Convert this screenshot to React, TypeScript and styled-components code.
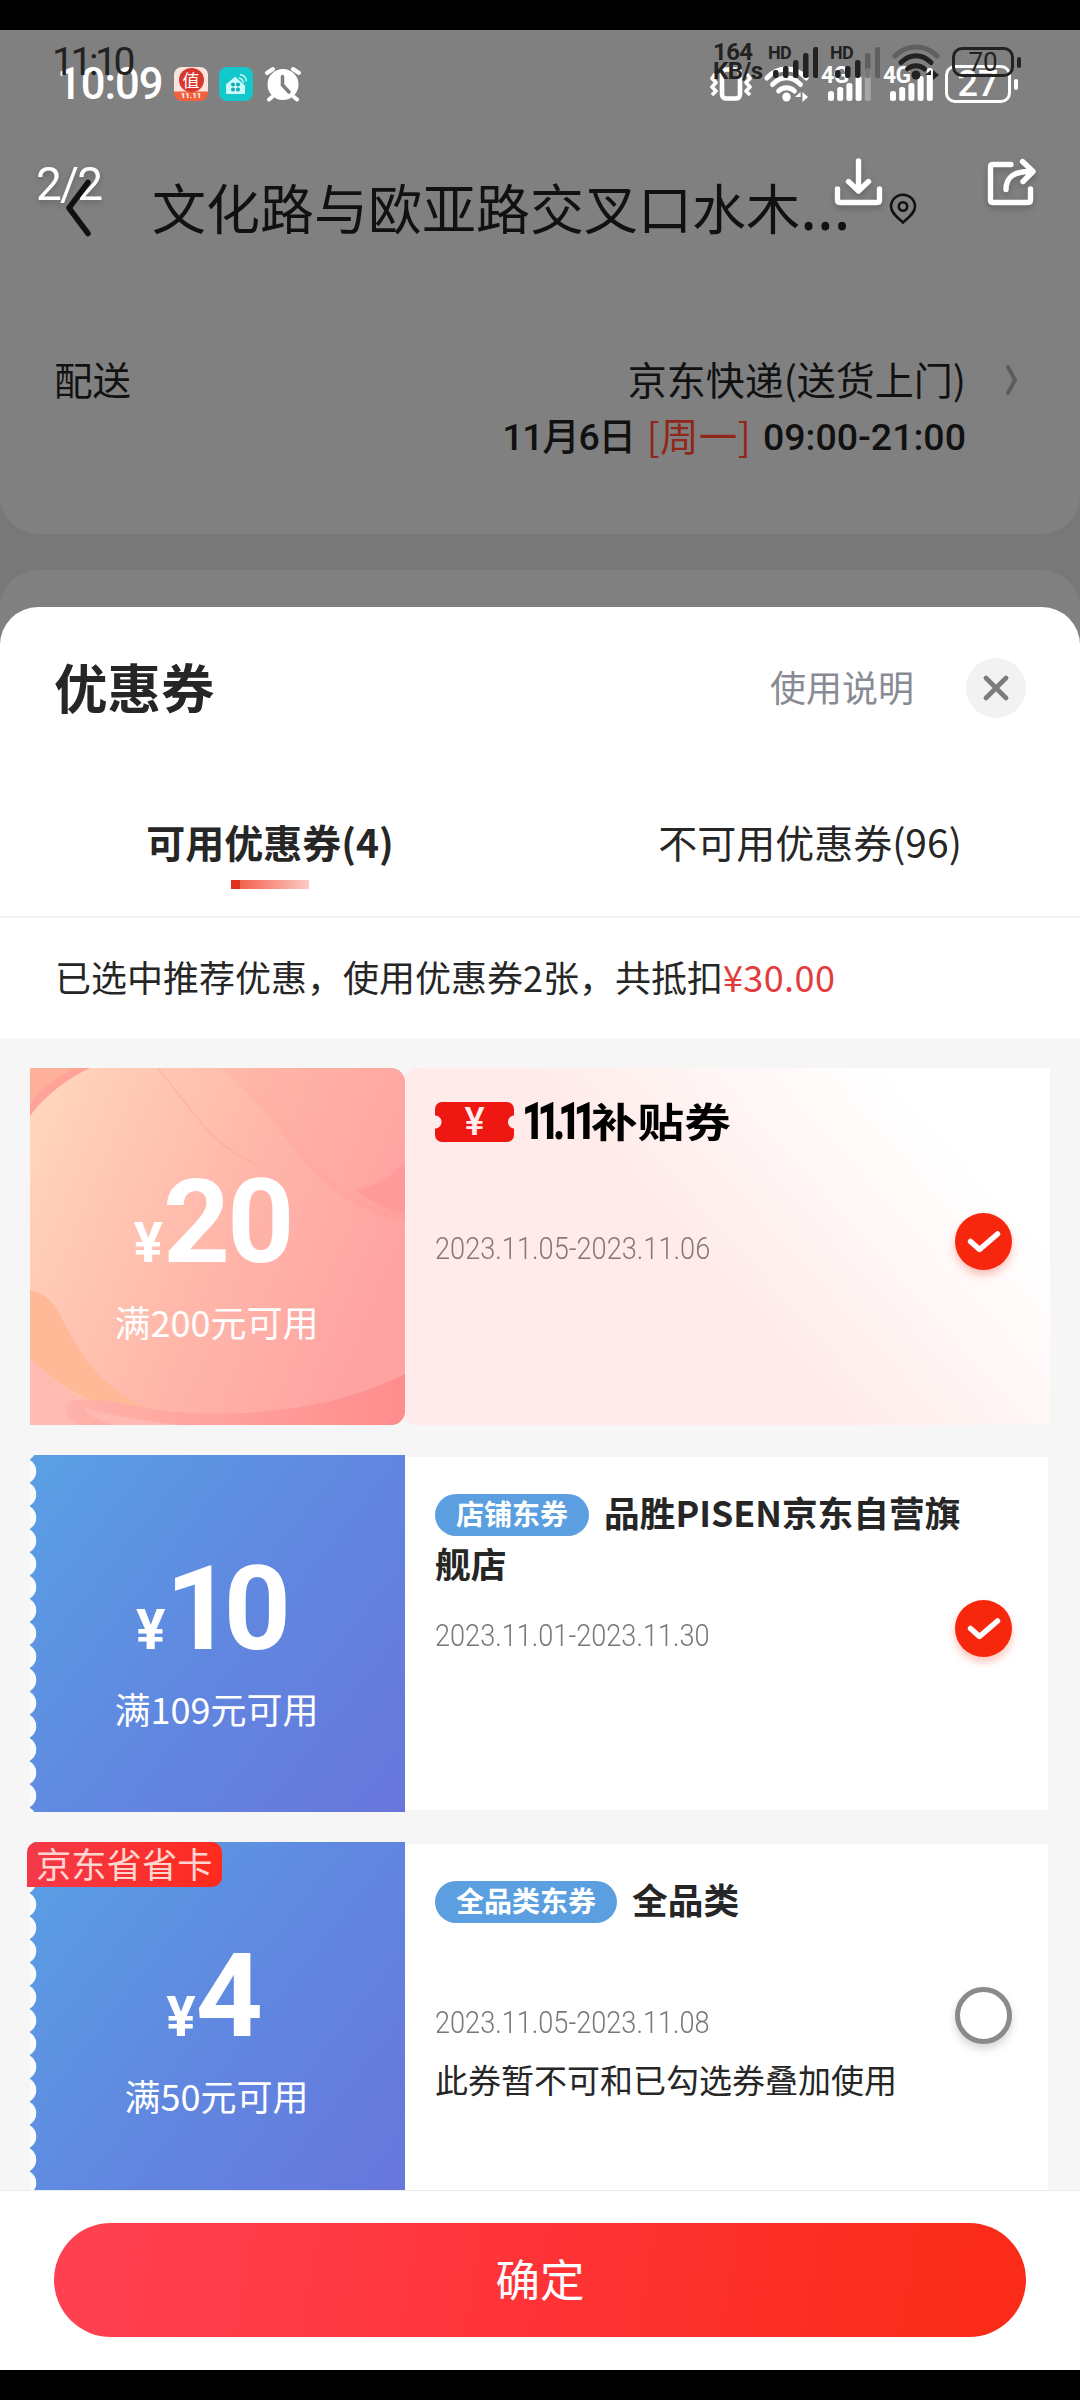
import React, { useState } from 'react';
import styled, { createGlobalStyle, css } from 'styled-components';

const sans = `Roboto, "Noto Sans CJK SC", sans-serif`;
const cjk = `"Noto Sans CJK SC", Roboto, sans-serif`;

const GlobalStyle = createGlobalStyle`
  * { box-sizing: border-box; }
  body { margin: 0; background: #000; }
  button { font: inherit; border: 0; padding: 0; margin: 0; background: none; color: inherit; }
`;

const Screen = styled.main`
  width: 1080px;
  height: 2400px;
  padding: 30px 0;
  overflow: hidden;
  background: #000;
  font-family: ${cjk};
  color: #262626;
  display: flex;
  flex-direction: column;
`;

/* ---------- dimmed order page ---------- */

const OrderPage = styled.section`
  position: relative;
  height: 619px;
  margin-bottom: -42px;
  flex: none;
  background: #787878;
  color: #111;
  display: flex;
  flex-direction: column;
  gap: 36px;
`;

const OrderCard = styled.div`
  height: 504px;
  flex: none;
  background: #808080;
  border-radius: 0 0 38px 38px;
  padding: 144px 60px 0 65px;
`;

const NextCard = styled.div`
  flex: 1;
  background: #808080;
  border-radius: 38px 38px 0 0;
`;

const AddressBar = styled.header`
  height: 70px;
  display: flex;
  align-items: center;
`;

const Address = styled.h1`
  margin: -4px 0 0 60px;
  font-size: 54px;
  line-height: 70px;
  font-weight: 400;
  white-space: nowrap;
`;

const Dots = styled.span`
  font-family: "Noto Sans", sans-serif;
  font-size: 64px;
  line-height: 40px;
`;

const PinSlot = styled.span`
  display: flex;
  margin-left: 38px;
`;

const DeliveryRow = styled.div`
  display: flex;
  justify-content: space-between;
  margin-top: 106px;
  font-size: 39px;
  line-height: 56px;
`;

const DeliveryLabel = styled.span`
  font-size: 38.5px;
  margin-left: -11px;
`;

const DeliveryValue = styled.div`
  display: flex;
  flex-direction: column;
  align-items: flex-end;
  margin: 0 -1px 0 auto;
`;

const DeliveryTime = styled.div`
  display: flex;
  gap: 12px;
  margin-top: 3px;
  font-family: ${sans};
  font-size: 37.5px;
  font-weight: 500;
  white-space: nowrap;
`;

const DeliveryDay = styled.span`
  letter-spacing: -1.3px;
`;

const Weekday = styled.span`
  font-family: ${cjk};
  font-size: 38.5px;
  font-weight: 400;
  line-height: 51px;
  letter-spacing: 0.3px;
  color: #8f2818;
`;

const RowArrow = styled.span`
  width: 55px;
  height: 60px;
  display: flex;
  align-items: center;
  justify-content: flex-end;
`;

/* ---------- overlaid status bars and viewer tools ---------- */

const StatusBar = styled.div<{ $top: number; $left: number; $right: number; $height: number; $tone: string }>`
  position: absolute;
  top: ${p => p.$top}px;
  left: ${p => p.$left}px;
  right: ${p => p.$right}px;
  height: ${p => p.$height}px;
  display: flex;
  align-items: center;
  justify-content: space-between;
  color: ${p => p.$tone};
  font-family: ${sans};
`;

const StatusGroup = styled.div<{ $gap: number }>`
  display: flex;
  align-items: center;
  gap: ${p => p.$gap}px;
  svg { display: block; flex: none; }
`;

const Clock = styled.span<{ $size: number; $weight: number; $width: number; $track: number }>`
  width: ${p => p.$width}px;
  padding-top: 1px;
  font-size: ${p => p.$size}px;
  font-weight: ${p => p.$weight};
  letter-spacing: ${p => p.$track}px;
  line-height: 1;
  white-space: nowrap;
`;

const Speed = styled.span`
  display: flex;
  flex-direction: column;
  width: 43px;
  font-size: 24px;
  line-height: 19px;
  font-weight: 700;
  letter-spacing: -0.6px;
`;

const SignalBox = styled.span<{ $w: number; $h: number }>`
  position: relative;
  display: flex;
  align-items: flex-end;
  justify-content: flex-end;
  width: ${p => p.$w}px;
  height: ${p => p.$h}px;
`;

const SignalMark = styled.span<{ $size: number }>`
  position: absolute;
  left: 0;
  top: 0;
  font-size: ${p => p.$size}px;
  line-height: 0.8;
  font-weight: 700;
  letter-spacing: -0.8px;
`;

const Battery = styled.span<{ $w: number; $h: number; $line: number; $size: number; $weight: number }>`
  position: relative;
  width: ${p => p.$w}px;
  height: ${p => p.$h}px;
  margin-right: 7px;
  border: ${p => p.$line}px solid currentColor;
  border-radius: 10px;
  display: flex;
  align-items: center;
  justify-content: center;
  font-size: ${p => p.$size}px;
  font-weight: ${p => p.$weight};
  line-height: 1;
  &::after {
    content: '';
    position: absolute;
    right: -${p => p.$line + 7}px;
    top: 50%;
    width: 4px;
    height: 11px;
    margin-top: -5px;
    border-radius: 2px;
    background: currentColor;
  }
`;

const AppBadge = styled.span<{ $kind: 'deal' | 'home' }>`
  width: 34px;
  height: 34px;
  border-radius: 8px;
  overflow: hidden;
  display: flex;
  flex-direction: column;
  align-items: center;
  justify-content: center;
  color: #fff;
  ${p =>
    p.$kind === 'deal'
      ? css`background: linear-gradient(#fbe4dc 0 70%, #f2603c 74%);`
      : css`background: #12c8cb;`}
`;

const DealSeal = styled.span`
  width: 25px;
  height: 24px;
  border-radius: 12px;
  background: #d8392f;
  font-family: ${cjk};
  font-size: 17px;
  line-height: 23px;
  text-align: center;
`;

const DealStrip = styled.span`
  font-size: 8px;
  line-height: 8px;
  font-weight: 700;
`;

const ViewerBar = styled.div`
  position: absolute;
  top: 120px;
  left: 36px;
  right: 43px;
  height: 64px;
  display: flex;
  align-items: center;
  gap: 104px;
  color: #fff;
  filter: drop-shadow(0 3px 3px rgba(0, 0, 0, 0.22));
  svg { display: block; }
`;

const PageCount = styled.span`
  margin-right: auto;
  padding-top: 3px;
  font-family: ${sans};
  font-size: 46px;
  line-height: 64px;
  letter-spacing: -1.8px;
`;

const BackButton = styled.button`
  display: flex;
  width: 27px;
  margin-top: -2px;
  position: relative;
  z-index: 2;
`;

/* ---------- coupon sheet ---------- */

const Sheet = styled.section`
  position: relative;
  flex: 1;
  min-height: 0;
  display: flex;
  flex-direction: column;
  background: #fff;
  border-radius: 38px 38px 0 0;
  overflow: hidden;
`;

const SheetHeader = styled.header`
  display: flex;
  align-items: center;
  height: 162px;
  padding: 0 54px;
  flex: none;
`;

const SheetTitle = styled.h2`
  margin: -4px auto 0 0;
  font-size: 53.5px;
  font-weight: 700;
  line-height: 80px;
`;

const HelpLink = styled.button`
  margin-top: -4px;
  font-size: 36px;
  line-height: 50px;
  color: #888b94;
`;

const CloseButton = styled.button`
  width: 60px;
  height: 60px;
  margin-left: 52px;
  border-radius: 50%;
  background: #f2f2f2;
  display: flex;
  align-items: center;
  justify-content: center;
`;

const Tabs = styled.nav`
  display: grid;
  grid-template-columns: 1fr 1fr;
  height: 149px;
  flex: none;
  border-bottom: 2px solid #f1f1f1;
`;

const Tab = styled.button<{ $active: boolean }>`
  display: flex;
  flex-direction: column;
  align-items: center;
  padding-top: 44px;
  font-size: 39px;
  line-height: 56px;
  font-weight: ${p => (p.$active ? 700 : 400)};
`;

const TabMark = styled.span`
  width: 78px;
  height: 9px;
  margin-top: 11px;
  background: linear-gradient(90deg, #e1301d 0 9px, #f2604e 9px, #fccdc4 100%);
`;

const Summary = styled.p`
  margin: 0;
  height: 120px;
  flex: none;
  padding: 0 55px;
  font-size: 36px;
  line-height: 117px;
`;

const SummaryAmount = styled.span`
  color: #e23c3c;
  letter-spacing: 0.4px;
`;

const CouponList = styled.div`
  height: 1153px;
  flex: none;
  padding: 30px 30px 0;
  background: #f6f6f6;
  overflow: hidden;
  display: flex;
  flex-direction: column;
  gap: 30px;
  border-bottom: 1px solid #ececec;
`;

const Card = styled.article`
  position: relative;
  display: flex;
  height: 357px;
  flex: none;
`;

const Face = styled.div<{ $festive?: boolean }>`
  position: relative;
  width: 375px;
  flex: none;
  display: flex;
  flex-direction: column;
  align-items: center;
  padding-top: 99px;
  color: #fff;
  overflow: hidden;
  z-index: 1;
  ${p =>
    p.$festive
      ? css`border-radius: 0 14px 14px 0;`
      : css`
          background:
            radial-gradient(circle at -6.5px 11.6px, #fafbfd 12.4px, transparent 13.2px) 0 4.6px / 7px 23.2px repeat-y,
            linear-gradient(128deg, #5a9ee4 5%, #6088e0 50%, #6876dc 100%);
          border-top-left-radius: 5px;
        `}
`;

const FaceArt = styled.svg`
  position: absolute;
  inset: 0;
`;

const Amount = styled.div<{ $shift: number }>`
  position: relative;
  display: flex;
  align-items: baseline;
  height: 127px;
  margin-left: ${p => p.$shift}px;
  font-family: ${sans};
  font-size: 117px;
  line-height: 110px;
  font-weight: 700;
`;

const Yen = styled.span`
  font-size: 55px;
`;

const Digits = styled.span<{ $track: number }>`
  display: inline-block;
  letter-spacing: ${p => p.$track}px;
`;

const Rule = styled.div`
  position: relative;
  margin-left: -2px;
  font-size: 36px;
  line-height: 54px;
`;

const Detail = styled.div<{ $festive?: boolean }>`
  position: relative;
  flex: 1;
  display: flex;
  flex-direction: column;
  align-items: flex-start;
  ${p =>
    p.$festive
      ? css`
          padding: 33px 85px 0 30px;
          background: linear-gradient(48deg, #ffebe9 45%, #fff6f5 65%, #fff 83%);
          border-radius: 12px 0 0 12px;
        `
      : css`
          margin: 2px 2px 2px 0;
          padding: 29px 80px 0 30px;
          background: #fff;
        `}
`;

const Heading = styled.h3`
  margin: 0;
  height: 126px;
  font-size: 35.7px;
  line-height: 51px;
  font-weight: 700;
`;

const Tag = styled.span`
  display: inline-block;
  height: 42px;
  margin-right: 15px;
  padding: 0 21px;
  border-radius: 21px;
  background: #5b9fe0;
  color: #fff;
  font-size: 28px;
  line-height: 39px;
  vertical-align: 2px;
`;

const BrandLine = styled.div`
  display: flex;
  align-items: center;
  height: 42px;
  margin-bottom: 82px;
  color: #000;
`;

const TicketIcon = styled.span`
  width: 79px;
  height: 40px;
  border-radius: 7px;
  margin-right: 8px;
  display: flex;
  align-items: center;
  justify-content: center;
  color: #ffeceb;
  font-family: ${sans};
  font-size: 38px;
  font-weight: 500;
  line-height: 40px;
  background:
    radial-gradient(circle at 0 50%, #ffebe9 6px, transparent 7px) left / 50% 100% no-repeat,
    radial-gradient(circle at 100% 50%, #ffebe9 6px, transparent 7px) right / 50% 100% no-repeat,
    #ee1712;
`;

const BrandDigits = styled.span`
  width: 69px;
  font-family: ${sans};
  font-size: 51px;
  font-weight: 900;
  line-height: 42px;
  letter-spacing: -9px;
  white-space: nowrap;
  transform: scaleX(0.76);
  transform-origin: left center;
`;

const BrandName = styled.span`
  font-size: 39.5px;
  font-weight: 700;
  line-height: 38px;
  margin-top: -4px;
  transform: scaleX(1.18);
  transform-origin: left center;
`;

const Period = styled.time<{ $festive?: boolean }>`
  font-family: ${sans};
  font-size: 32px;
  font-weight: 300;
  line-height: 46px;
  white-space: nowrap;
  transform: scaleX(${p => (p.$festive ? 0.85 : 0.848)});
  transform-origin: left center;
  color: ${p => (p.$festive ? '#857878' : '#777')};
`;

const Note = styled.p`
  margin: 8px 0 0;
  font-size: 33px;
  line-height: 52px;
  white-space: nowrap;
`;

const Choice = styled.button<{ $on: boolean; $edge: number; $up: number }>`
  position: absolute;
  top: ${p => p.$up}px;
  right: ${p => p.$edge}px;
  width: 57px;
  height: 57px;
  border-radius: 50%;
  display: flex;
  align-items: center;
  justify-content: center;
  ${p =>
    p.$on
      ? css`background: #f6270c; box-shadow: 0 5px 9px rgba(246, 39, 12, 0.28);`
      : css`background: #fff; border: 5px solid #8a8a8a; box-shadow: 0 5px 8px rgba(0, 0, 0, 0.16);`}
`;

const Sticker = styled.span`
  position: absolute;
  z-index: 2;
  top: 0;
  left: -3px;
  height: 45px;
  padding: 0 9px;
  border-radius: 10px 10px 10px 0;
  background: linear-gradient(100deg, #f43a4b, #ff2a1c);
  color: #ffd5d0;
  font-size: 35.3px;
  line-height: 42px;
`;

const Footer = styled.footer`
  flex: 1;
  padding: 32px 54px;
`;

const Confirm = styled.button`
  display: block;
  width: 972px;
  height: 114px;
  padding-bottom: 4px;
  border-radius: 57px;
  background: linear-gradient(100deg, #ff4050 5%, #ff3337 50%, #fa2c19 92%);
  color: #fff;
  font-size: 44.5px;
  line-height: 110px;
`;

/* ---------- drawings ---------- */

const Bars = ({ w, step, hs, fade, faded }: { w: number; step: number; hs: number[]; fade: number; faded: number }) => {
  const top = Math.max(...hs);
  return (
    <svg width={step * (hs.length - 1) + w} height={top}>
      {hs.map((h, i) => (
        <rect key={i} x={i * step} y={top - h} width={w} height={h} rx={w / 2.4} fill="currentColor"
          opacity={i >= hs.length - faded ? fade : 1} />
      ))}
    </svg>
  );
};

const Wifi = ({ outer, width }: { outer: number; width: number }) => (
  <svg width={width} height="36" viewBox="0 0 48 36" preserveAspectRatio="none" fill="none" stroke="currentColor" strokeWidth="5" strokeLinecap="round">
    <path d="M3 12C15 0 33 0 45 12" opacity={outer} />
    <path d="M9 18.5C18 9.5 30 9.5 39 18.5" />
    <path d="M15.5 25C20 20.5 28 20.5 32.500 25" />
    <circle cx="24" cy="31" r="4.500" fill="currentColor" stroke="none" />
    <path d="M39 26l-6 5h6zM41 36V26l6 5z" fill="currentColor" stroke="none" />
  </svg>
);

const Vibrate = () => (
  <svg width="42" height="34" viewBox="0 0 42 34" fill="none" stroke="currentColor">
    <rect x="12" y="2.500" width="18" height="29" rx="4" strokeWidth="4.600" />
    <path d="M5 7L2 11.500L6 15.500L2 20L6 24L2 28" strokeWidth="3.600" strokeLinejoin="round" />
    <path d="M37 7L40 11.500L36 15.500L40 20L36 24L40 28" strokeWidth="3.600" strokeLinejoin="round" />
  </svg>
);

const Alarm = () => (
  <svg width="38" height="36" viewBox="0 0 38 36" fill="none" strokeLinecap="round">
    <path d="M3 7L9 3M35 7L29 3M8 31L5 33.500M30 31L33 33.500" stroke="#fff" strokeWidth="4" />
    <circle cx="19" cy="18.500" r="15.500" fill="#fff" />
    <path d="M18.500 10.500V19L25 26" stroke="#808080" strokeWidth="3.600" />
  </svg>
);

const House = () => (
  <svg width="22" height="22" viewBox="0 0 22 22">
    <path d="M2 20V12L10 5L19 13V20z" fill="#c9fbf8" stroke="#c9fbf8" strokeWidth="2" strokeLinejoin="round" />
    <path d="M14 5q4 1 4.500 5M15 1.500q6 1 6.500 7" stroke="#c9fbf8" strokeWidth="1.300" fill="none" />
    <g fill="#15a9b0"><circle cx="8" cy="11.500" r="2" /><circle cx="13" cy="11.500" r="2" /><circle cx="8" cy="16.500" r="2" /><circle cx="13" cy="16.500" r="2" /></g>
  </svg>
);

const Pin = () => (
  <svg width="28" height="32" viewBox="0 0 28 32" fill="none" stroke="#111" strokeWidth="2.600">
    <path d="M14 29.500C9 25 2 20 2 13.500A12 11.800 0 0 1 26 13.500C26 20 19 25 14 29.500z" />
    <circle cx="14" cy="13.500" r="4.200" />
  </svg>
);

const Download = () => (
  <svg width="49" height="48" viewBox="0 0 49 48" fill="none" stroke="currentColor" strokeWidth="5.400" strokeLinecap="round" strokeLinejoin="round">
    <path d="M24.500 3V32M14.500 23.500L24.500 33L34.500 23.500M3.500 31V42Q3.500 44.500 6 44.500H43Q45.500 44.500 45.500 42V31" />
  </svg>
);

const Share = () => (
  <svg width="50" height="48" viewBox="0 0 50 48" fill="none" stroke="currentColor" strokeWidth="5.400" strokeLinecap="round" strokeLinejoin="round">
    <path d="M24 6.500H6Q3.500 6.500 3.500 9V42Q3.500 44.500 6 44.500H41Q43.500 44.500 43.500 42V31" />
    <path d="M19 31.500C19 19 27 13 45 13.500M35.500 3.500L46 13.500L36 23.500" />
  </svg>
);

const Tick = () => (
  <svg width="34" height="24" viewBox="0 0 34 24" fill="none" stroke="#fff" strokeWidth="5.500" strokeLinecap="round" strokeLinejoin="round">
    <path d="M3.500 11.500L12.500 19.500L30.500 4" />
  </svg>
);

const PetalArt = () => (
  <FaceArt width="375" height="357" viewBox="0 0 375 357" fill="none">
    <defs>
      <linearGradient id="petal" x1="0" y1=".15" x2="1" y2=".55">
        <stop offset="0" stopColor="#ffd5bd" /><stop offset=".5" stopColor="#ffb9aa" /><stop offset="1" stopColor="#ffa2a2" />
      </linearGradient>
      <linearGradient id="petalRed" x1="0" y1="0" x2="1" y2="0">
        <stop offset="0" stopColor="#ffb3aa" /><stop offset="1" stopColor="#ff8c8c" />
      </linearGradient>
      <linearGradient id="petalEdge" x1="0" y1="0" x2="1" y2="1">
        <stop offset="0" stopColor="#ff8f88" stopOpacity=".12" /><stop offset="1" stopColor="#ff8f80" stopOpacity=".22" />
      </linearGradient>
    </defs>
    <rect width="375" height="357" fill="url(#petal)" />
    <path d="M205 0C240 28 262 75 295 105C320 130 350 144 375 146V0z" fill="#ff9494" opacity=".12" />
    <path d="M190 0C235 32 262 88 295 115C320 136 350 152 375 153V146C350 144 320 130 295 105C262 75 240 28 205 0z" fill="url(#petalEdge)" />
    <path d="M128 0C165 45 180 78 230 98" stroke="#ff9c90" strokeWidth="1.500" opacity=".35" />
    <path d="M325 122Q352 117 375 95V146Q348 140 325 122z" fill="#ff8585" opacity=".28" />
    <path d="M0 0H60C38 10 14 28 0 48z" fill="#ffb09b" />
    <path d="M60 0C38 10 14 28 0 48V36C12 20 28 8 45 0z" fill="#ffa297" />
    <path d="M0 222C14 224 24 234 34 254C54 296 84 332 132 345L70 336C40 325 18 308 0 290z" fill="#ffb996" />
    <path d="M0 290C25 316 45 328 60 334L140 345V357H0z" fill="#ffbab2" />
    <path d="M85 333C160 355 290 350 375 306V357H48C30 345 32 332 50 332z" fill="url(#petalRed)" />
    <path d="M55 340Q52 347 82 357H150Q90 350 55 340z" fill="#ffb8b2" />
  </FaceArt>
);

/* ---------- data ---------- */

type Coupon = {
  id: string; amount: string; shift: number; track: number; rule: string; period: string;
  festive?: boolean; tag?: string; title?: string; note?: string; sticker?: string;
};

const coupons: Coupon[] = [
  { id: 'subsidy', amount: '20', shift: -10, track: -3, rule: '满200元可用', period: '2023.11.05-2023.11.06', festive: true },
  { id: 'shop', amount: '10', shift: -17, track: -9, rule: '满109元可用', period: '2023.11.01-2023.11.30', tag: '店铺东券', title: '品胜PISEN京东自营旗舰店' },
  { id: 'all', amount: '4', shift: -12, track: -6, rule: '满50元可用', period: '2023.11.05-2023.11.08', tag: '全品类东券', title: '全品类', note: '此券暂不可和已勾选券叠加使用', sticker: '京东省省卡' },
];

const CouponCard = ({ c, on, onToggle }: { c: Coupon; on: boolean; onToggle: () => void }) => (
  <Card>
    {c.sticker && <Sticker>{c.sticker}</Sticker>}
    <Face $festive={c.festive}>
      {c.festive && <PetalArt />}
      <Amount $shift={c.shift}><Yen>¥</Yen><Digits $track={c.track}>{c.amount}</Digits></Amount>
      <Rule>{c.rule}</Rule>
    </Face>
    <Detail $festive={c.festive}>
      {c.festive ? (
        <BrandLine><TicketIcon>¥</TicketIcon><BrandDigits>11.11</BrandDigits><BrandName>补贴券</BrandName></BrandLine>
      ) : (
        <Heading><Tag>{c.tag}</Tag>{c.title}</Heading>
      )}
      <Period $festive={c.festive}>{c.period}</Period>
      {c.note && <Note>{c.note}</Note>}
      <Choice $on={on} $edge={c.festive ? 38 : 36} $up={c.festive ? 145 : 143} onClick={onToggle}>{on && <Tick />}</Choice>
    </Detail>
  </Card>
);

export default function App() {
  const [tab, setTab] = useState(0);
  const [picked, setPicked] = useState<string[]>(['subsidy', 'shop']);
  const toggle = (id: string) => setPicked(p => (p.includes(id) ? p.filter(x => x !== id) : [...p, id]));

  return (
    <>
      <GlobalStyle />
      <Screen>
        <OrderPage>
          <StatusBar $top={35} $left={57} $right={62} $height={38} $tone="#fff">
            <StatusGroup $gap={11}>
              <Clock $size={43.5} $weight={500} $width={106} $track={-1}>10:09</Clock>
              <AppBadge $kind="deal"><DealSeal>值</DealSeal><DealStrip>11.11</DealStrip></AppBadge>
              <AppBadge $kind="home"><House /></AppBadge>
              <Alarm />
            </StatusGroup>
            <StatusGroup $gap={12}>
              <Vibrate />
              <Wifi outer={1} width={45} />
              <SignalBox $w={50} $h={34}><SignalMark $size={23}>4G</SignalMark><Bars w={6} step={9.2} hs={[10, 14, 18, 25, 33]} fade={0.3} faded={1} /></SignalBox>
              <SignalBox $w={50} $h={34}><SignalMark $size={23}>4G</SignalMark><Bars w={6} step={9.2} hs={[10, 14, 18, 25, 33]} fade={1} faded={0} /></SignalBox>
              <Battery $w={66} $h={38} $line={3} $size={36} $weight={500}>27</Battery>
            </StatusGroup>
          </StatusBar>
          <StatusBar $top={15} $left={52} $right={59} $height={34} $tone="#222">
            <Clock $size={39} $weight={400} $width={90} $track={-3.4}>11:10</Clock>
            <StatusGroup $gap={12}>
              <Speed><span>164</span><span>KB/s</span></Speed>
              <SignalBox $w={50} $h={32}><SignalMark $size={18}>HD</SignalMark><Bars w={5.5} step={10} hs={[8, 12, 18, 25, 31]} fade={1} faded={0} /></SignalBox>
              <SignalBox $w={50} $h={32}><SignalMark $size={18}>HD</SignalMark><Bars w={5.5} step={10} hs={[8, 12, 18, 25, 31]} fade={0.35} faded={2} /></SignalBox>
              <Wifi outer={0.35} width={48} />
              <Battery $w={62} $h={30} $line={3} $size={26} $weight={400}>70</Battery>
            </StatusGroup>
          </StatusBar>
          <ViewerBar>
            <PageCount>2/2</PageCount>
            <Download />
            <Share />
          </ViewerBar>
          <OrderCard>
            <AddressBar>
              <BackButton aria-label="back">
                <svg width="27" height="58" viewBox="0 0 27 58" fill="none" stroke="#111" strokeWidth="5.500" strokeLinecap="round" strokeLinejoin="round">
                  <path d="M23 3.500L4 29L23 54.500" />
                </svg>
              </BackButton>
              <Address>文化路与欧亚路交叉口水木<Dots>…</Dots></Address>
              <PinSlot><Pin /></PinSlot>
            </AddressBar>
            <DeliveryRow>
              <DeliveryLabel>配送</DeliveryLabel>
              <DeliveryValue>
                <span>京东快递(送货上门)</span>
                <DeliveryTime>
                  <DeliveryDay>11月6日</DeliveryDay>
                  <Weekday>[周一]</Weekday>
                  <span>09:00-21:00</span>
                </DeliveryTime>
              </DeliveryValue>
              <RowArrow>
                <svg width="14" height="32" viewBox="0 0 14 32" fill="none" stroke="#5c5c5c" strokeWidth="4" strokeLinecap="round">
                  <path d="M2 3L9 16L2 29" />
                </svg>
              </RowArrow>
            </DeliveryRow>
          </OrderCard>
          <NextCard />
        </OrderPage>

        <Sheet>
          <SheetHeader>
            <SheetTitle>优惠券</SheetTitle>
            <HelpLink>使用说明</HelpLink>
            <CloseButton aria-label="close">
              <svg width="26" height="26" viewBox="0 0 26 26" stroke="#7c7c7c" strokeWidth="4.600" strokeLinecap="round">
                <path d="M3 3L23 23M23 3L3 23" />
              </svg>
            </CloseButton>
          </SheetHeader>
          <Tabs>
            {['可用优惠券(4)', '不可用优惠券(96)'].map((t, i) => (
              <Tab key={t} $active={tab === i} onClick={() => setTab(i)}>
                {t}
                {tab === i && <TabMark />}
              </Tab>
            ))}
          </Tabs>
          <Summary>已选中推荐优惠，使用优惠券2张，共抵扣<SummaryAmount>¥30.00</SummaryAmount></Summary>
          <CouponList>
            {coupons.map(c => (
              <CouponCard key={c.id} c={c} on={picked.includes(c.id)} onToggle={() => toggle(c.id)} />
            ))}
          </CouponList>
          <Footer>
            <Confirm>确定</Confirm>
          </Footer>
        </Sheet>
      </Screen>
    </>
  );
}
